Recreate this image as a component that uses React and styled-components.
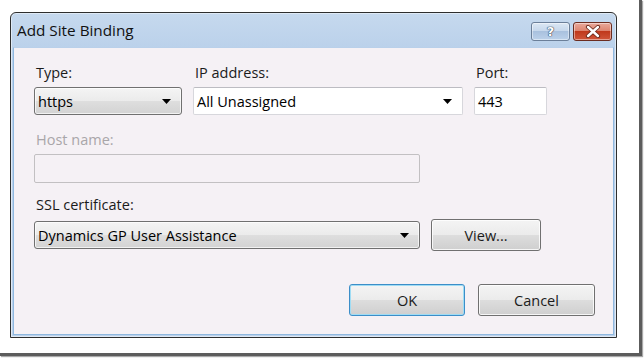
import { styled, createGlobalStyle } from "styled-components";

const GlobalStyle = createGlobalStyle`
  html, body {
    margin: 0;
    padding: 0;
    background: #ffffff;
  }
  body {
    font-family: "Open Sans", "Noto Sans", sans-serif;
  }
`;

function ArrowDown() {
  return (
    <svg width="9" height="5" viewBox="0 0 9 5">
      <path d="M0 0 H9 L4.5 5 Z" fill="#000" />
    </svg>
  );
}

function CloseGlyph() {
  return (
    <svg width="16" height="13" viewBox="0 0 16 13">
      <path
        d="M3 2 L13 11 M13 2 L3 11"
        stroke="#6a2a1c"
        strokeWidth="4.2"
        strokeLinecap="round"
      />
      <path
        d="M3 2 L13 11 M13 2 L3 11"
        stroke="#ffffff"
        strokeWidth="2.4"
        strokeLinecap="round"
      />
    </svg>
  );
}

export default function App() {
  return (
    <>
      <GlobalStyle />
      <SCPage>
        <SCShot>
          <SCDialog>
            <SCTitleBar>
              <span>Add Site Binding</span>
              <SCCaptionButtons>
                <SCCaptionButton>
                  <SCHelpGlyph>?</SCHelpGlyph>
                </SCCaptionButton>
                <SCCaptionButton $close>
                  <CloseGlyph />
                </SCCaptionButton>
              </SCCaptionButtons>
            </SCTitleBar>

            <SCClient>
              <SCRow>
                <SCField $width={148}>
                  <SCLabel>Type:</SCLabel>
                  <SCCombo>
                    <span>https</span>
                    <ArrowDown />
                  </SCCombo>
                </SCField>
                <SCField $width={270}>
                  <SCLabel>IP address:</SCLabel>
                  <SCTextBox>
                    <span>All Unassigned</span>
                    <ArrowDown />
                  </SCTextBox>
                </SCField>
                <SCField $width={73}>
                  <SCLabel>Port:</SCLabel>
                  <SCTextBox>
                    <span>443</span>
                  </SCTextBox>
                </SCField>
              </SCRow>

              <SCField $width={386} $top={17}>
                <SCLabel $disabled>Host name:</SCLabel>
                <SCTextBox $disabled />
              </SCField>

              <SCField $top={14}>
                <SCLabel>SSL certificate:</SCLabel>
                <SCRow $align="center">
                  <SCCombo style={{ width: 386 }}>
                    <span>Dynamics GP User Assistance</span>
                    <ArrowDown />
                  </SCCombo>
                  <SCButton $width={110}>View...</SCButton>
                </SCRow>
              </SCField>

              <SCFooter>
                <SCButton $width={116} $default>
                  OK
                </SCButton>
                <SCButton $width={117}>Cancel</SCButton>
              </SCFooter>
            </SCClient>
          </SCDialog>
        </SCShot>
      </SCPage>
    </>
  );
}

const SCPage = styled.div`
  width: 644px;
  height: 358px;
  overflow: hidden;
`;

const SCShot = styled.div`
  width: 642px;
  height: 356px;
  box-sizing: border-box;
  padding: 12px 0 0 10px;
  border-right: 3px solid #5c5c5c;
  border-bottom: 3px solid #5c5c5c;
  box-shadow: 1px 1px 1px #a8a8a8;
`;

const SCDialog = styled.div`
  width: 607px;
  height: 326px;
  box-sizing: border-box;
  display: flex;
  flex-direction: column;
  border: 1px solid #2e2e2e;
  border-radius: 6px 6px 0 0;
  background: linear-gradient(#c6d9ee, #b9d0ea 40px);
  padding: 0 2px 2px 2px;
  box-shadow: inset 0 0 0 1px #dfeaf6;
`;

const SCTitleBar = styled.div`
  height: 34px;
  display: flex;
  align-items: center;
  justify-content: space-between;
  padding-left: 4px;
  padding-right: 2px;
  font-family: "Open Sans", "Noto Sans", sans-serif;
  font-size: 15.3px;
  color: #111;
`;

const SCCaptionButtons = styled.div`
  display: flex;
  gap: 3px;
  margin-top: 2px;
`;

const SCCaptionButton = styled.div`
  width: 39px;
  height: 19px;
  box-sizing: border-box;
  display: flex;
  align-items: center;
  justify-content: center;
  border: 1px solid ${(p) => (p.$close ? "#6b2c20" : "#6b7f99")};
  border-radius: 3px;
  background: ${(p) =>
    p.$close
      ? "linear-gradient(#e9a99b 0%, #dd8570 45%, #c0391c 50%, #d0563a 100%)"
      : "linear-gradient(#dbe7f4 0%, #c7d8ec 45%, #a9c1de 50%, #bcd1ea 100%)"};
  box-shadow: inset 0 0 0 1px rgba(255, 255, 255, 0.45);
`;

const SCHelpGlyph = styled.span`
  font-family: "DejaVu Sans", sans-serif;
  font-weight: bold;
  font-size: 13px;
  line-height: 1;
  color: #fff;
  text-shadow: 0 0 1px #2c3e58, 0 0 1px #2c3e58, 0 0 1px #2c3e58;
`;

const SCClient = styled.div`
  flex: 1;
  display: flex;
  flex-direction: column;
  background: #f5f1f5;
  border: 1px solid #8fb8df;
  border-top-color: #b9d0ea;
  padding: 17px 0 0 20px;
  font-family: "Open Sans", "Noto Sans", sans-serif;
  font-size: 14.5px;
  color: #1b1b1b;
`;

const SCRow = styled.div`
  display: flex;
  align-items: ${(p) => p.$align || "flex-start"};
  gap: 11px;
`;

const SCField = styled.div`
  display: flex;
  flex-direction: column;
  gap: 6px;
  width: ${(p) => (p.$width ? `${p.$width}px` : "auto")};
  margin-top: ${(p) => p.$top || 0}px;
`;

const SCLabel = styled.div`
  height: 16px;
  line-height: 16px;
  padding-left: 2px;
  color: ${(p) => (p.$disabled ? "#a9a6a9" : "#1b1b1b")};
`;

const SCCombo = styled.div`
  height: 28px;
  box-sizing: border-box;
  display: flex;
  align-items: center;
  justify-content: space-between;
  padding: 0 10px 0 3px;
  border: 1px solid #707070;
  border-radius: 3px;
  background: linear-gradient(#f4f4f4 0%, #ebebeb 50%, #dedede 51%, #d3d3d3 100%);
  box-shadow: inset 0 0 0 1px rgba(255, 255, 255, 0.7);
  color: #000;
`;

const SCTextBox = styled.div`
  height: ${(p) => (p.$disabled ? 29 : 28)}px;
  box-sizing: border-box;
  display: flex;
  align-items: center;
  justify-content: space-between;
  padding: 0 10px 0 3px;
  border: 1px solid ${(p) => (p.$disabled ? "#c2c0c2" : "#d7d7dc")};
  border-top-color: ${(p) => (p.$disabled ? "#c2c0c2" : "#bcbcc2")};
  border-radius: 2px;
  background: ${(p) => (p.$disabled ? "#f5f1f5" : "#ffffff")};
  color: #000;
`;

const SCButton = styled.div`
  width: ${(p) => p.$width}px;
  height: 32px;
  box-sizing: border-box;
  display: flex;
  align-items: center;
  justify-content: center;
  border: 1px solid ${(p) => (p.$default ? "#3c8ec8" : "#707070")};
  border-radius: 3px;
  background: linear-gradient(#f4f4f4 0%, #ebebeb 50%, #dddddd 51%, #cfcfcf 100%);
  box-shadow: inset 0 0 0 1px
    ${(p) => (p.$default ? "#9fdcf4" : "rgba(255, 255, 255, 0.8)")};
  color: #1b1b1b;
`;

const SCFooter = styled.div`
  display: flex;
  gap: 13px;
  margin-top: 33px;
  margin-left: 315px;
`;
